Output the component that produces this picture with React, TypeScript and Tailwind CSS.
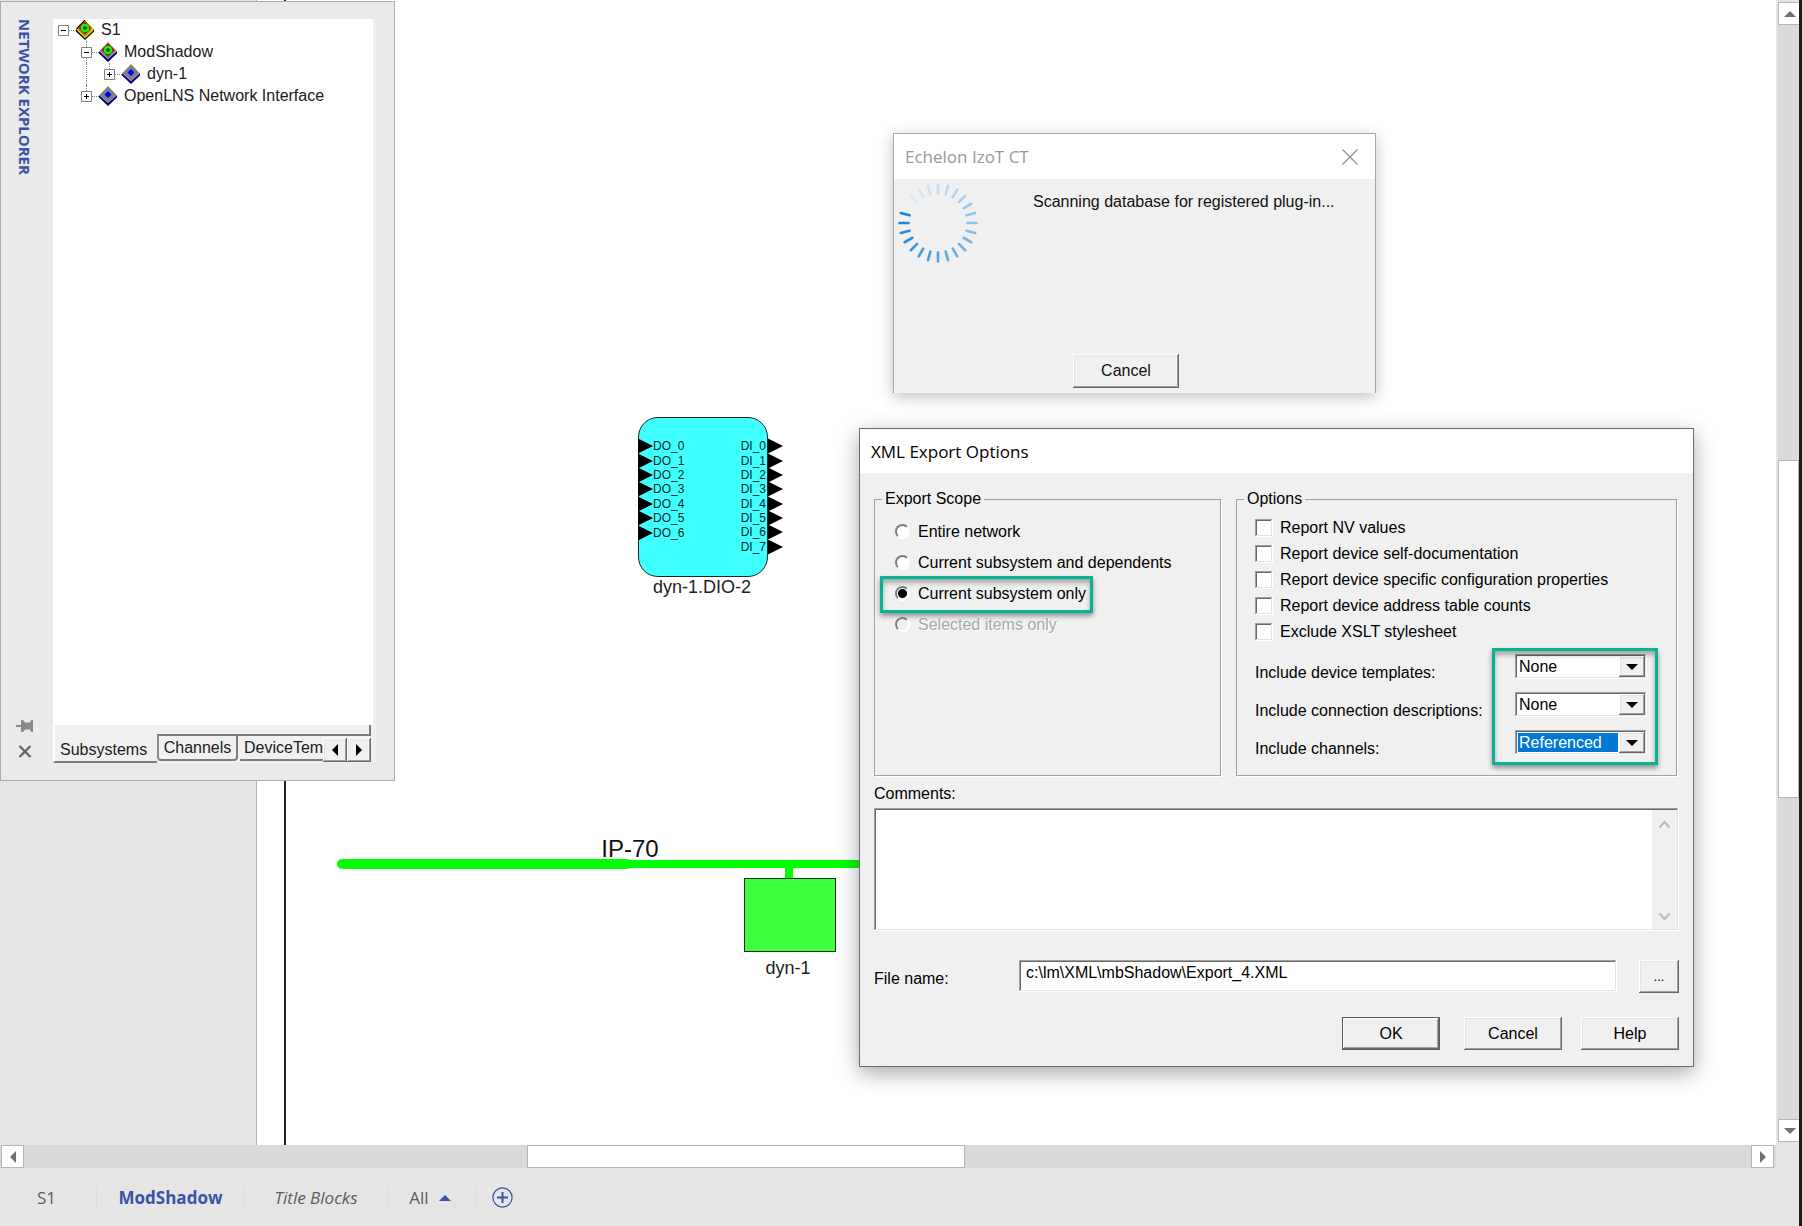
import React from "react";

const RAISED =
  "bg-[#f0f0f0] shadow-[inset_-1px_-1px_0_#696969,inset_1px_1px_0_#ffffff,inset_-2px_-2px_0_#a0a0a0,inset_2px_2px_0_#e3e3e3]";
const SUNKEN =
  "bg-white shadow-[inset_-1px_-1px_0_#ffffff,inset_1px_1px_0_#a0a0a0,inset_-2px_-2px_0_#e3e3e3,inset_2px_2px_0_#696969]";
const ARIAL = "font-['Liberation_Sans',Arial,sans-serif]";
const SEGOE = "font-['Open_Sans','Noto_Sans',sans-serif]";

type Dir = "up" | "down" | "left" | "right";
const TRIANGLES: Record<Dir, string> = {
  up: "M0 6 L6 0 L12 6 Z",
  down: "M0 0 L12 0 L6 6 Z",
  left: "M6 0 L6 12 L0 6 Z",
  right: "M0 0 L6 6 L0 12 Z",
};

function Triangle({ dir, className = "" }: { dir: Dir; className?: string }) {
  const tall = dir === "left" || dir === "right";
  return (
    <svg
      aria-hidden="true"
      width={tall ? 6 : 12}
      height={tall ? 12 : 6}
      viewBox={tall ? "0 0 6 12" : "0 0 12 6"}
      className={className}
    >
      <path d={TRIANGLES[dir]} fill="currentColor" />
    </svg>
  );
}

function ScrollButton({ dir }: { dir: Dir }) {
  return (
    <button
      type="button"
      aria-label={`Scroll ${dir}`}
      className="flex size-[23px] shrink-0 items-center justify-center border border-[#b4b4b4] bg-white text-[#707070]"
    >
      <Triangle dir={dir} />
    </button>
  );
}

/* ---------- Network explorer ---------- */

type NodeKind = "system" | "subsystem" | "device";

function NodeIcon({ kind }: { kind: NodeKind }) {
  const face = kind === "system" ? "#ffff00" : "#808080";
  const side = kind === "system" ? "#000000" : "#000080";
  return (
    <svg aria-hidden="true" width="18" height="20" viewBox="0 0 18 20" className="shrink-0">
      <path d="M0 9 L9 17 L18 9 V11.5 L9 20 L0 11.5 Z" fill={side} />
      <path d="M9 0 L17.5 9 L9 17 L0.5 9 Z" fill={face} />
      {kind === "system" && (
        <>
          <path d="M9 0 L0.5 9" stroke="#000" strokeWidth="1.2" />
          <path d="M1.5 10 L9 17.5 L17 10" fill="none" stroke="#c8c800" strokeWidth="1.5" />
          <path d="M2 8.5 L9 15.5 L16 8.5" fill="none" stroke="#000" strokeWidth="0.8" />
        </>
      )}
      {kind === "device" ? (
        <path d="M9 5 L12.5 8.5 L9 12 L5.5 8.5 Z" fill="#0000ff" />
      ) : (
        <>
          <path d="M9 1.5 L15.5 8 L9 14.5 L2.5 8 Z" fill="#c00000" />
          <path d="M9 1 L15.5 8" stroke="#ff3000" strokeWidth="1" />
          <circle cx="9" cy="8" r="4.3" fill="#00ff00" />
          <path d="M9 6 V10 M7 8 H11" stroke="#003000" strokeWidth="1.4" />
        </>
      )}
    </svg>
  );
}

const TREE: { label: string; kind: NodeKind; open: boolean; indent: string; line: string }[] = [
  { label: "S1", kind: "system", open: true, indent: "pl-[5px]", line: "" },
  {
    label: "ModShadow",
    kind: "subsystem",
    open: true,
    indent: "pl-[28px]",
    line: "before:absolute before:left-[33px] before:top-0 before:h-[6px] before:border-l before:border-dotted before:border-[#808080] after:absolute after:left-[33px] after:top-[17px] after:h-[5px] after:border-l after:border-dotted after:border-[#808080]",
  },
  {
    label: "dyn-1",
    kind: "device",
    open: false,
    indent: "pl-[51px]",
    line: "before:absolute before:left-[56px] before:top-0 before:h-[6px] before:border-l before:border-dotted before:border-[#808080] after:absolute after:left-[33px] after:top-0 after:h-[22px] after:border-l after:border-dotted after:border-[#808080]",
  },
  {
    label: "OpenLNS Network Interface",
    kind: "device",
    open: false,
    indent: "pl-[28px]",
    line: "before:absolute before:left-[33px] before:top-0 before:h-[6px] before:border-l before:border-dotted before:border-[#808080]",
  },
];

function Tree() {
  return (
    <ul className={`flex-1 bg-white text-[16px] leading-[22px] text-[#202020] ${ARIAL}`}>
      {TREE.map((n) => (
        <li key={n.label} className={`relative flex h-[22px] items-center ${n.indent} ${n.line}`}>
          <button
            type="button"
            aria-label={`${n.open ? "Collapse" : "Expand"} ${n.label}`}
            className="size-[11px] shrink-0 bg-white"
          >
            <svg aria-hidden="true" width="11" height="11" viewBox="0 0 11 11">
              <path d="M0.5 0.5 H10.5 V10.5 H0.5 Z" fill="none" stroke="#808080" />
              <path d={n.open ? "M3 5.5 H8" : "M3 5.5 H8 M5.5 3 V8"} stroke="#000" />
            </svg>
          </button>
          <span className="w-[7px] border-t border-dotted border-[#808080]" />
          <NodeIcon kind={n.kind} />
          <span className="pl-[7px]">{n.label}</span>
        </li>
      ))}
    </ul>
  );
}

function NetworkExplorer() {
  return (
    <aside className="absolute left-0 top-px flex h-[780px] w-[395px] border border-[#acacac] bg-[#eaeaea]">
      <div className="flex w-[52px] flex-col items-center pb-[22px] pr-[4px] pt-[17px]">
        <h2
          className={`text-[15px] font-bold leading-[20px] text-[#3a53a4] [writing-mode:vertical-rl] ${SEGOE}`}
        >
          NETWORK EXPLORER
        </h2>
        <button type="button" aria-label="Pin" className="mt-auto text-[#868a8c]">
          <svg aria-hidden="true" width="18" height="12" viewBox="0 0 18 12">
            <path d="M0 5 H5 V0 H7 L9 2.5 H14 L15 0 H17 V12 H15 L14 9.5 H9 L7 12 H5 V7 H0 Z" fill="currentColor" />
          </svg>
        </button>
        <button type="button" aria-label="Close" className="mt-[13px] text-[#666]">
          <svg aria-hidden="true" width="14" height="13" viewBox="0 0 14 13">
            <path d="M1.5 1 L12.5 12 M12.5 1 L1.5 12" stroke="currentColor" strokeWidth="2.4" />
          </svg>
        </button>
      </div>
      <div className="my-[17px] mr-[18px] flex min-w-0 flex-1 flex-col bg-[#f0f0f0]">
        <div className="mr-[3px] flex flex-1 flex-col">
          <Tree />
        </div>
        <div className={`flex h-[38px] items-start pr-[5px] text-[16px] leading-[22px] text-[#202020] ${ARIAL}`}>
          <button
            type="button"
            className="h-[38px] w-[104px] shrink-0 border-b-2 border-l-2 border-b-[#7c7c7c] border-l-white pl-[5px] pt-[13px] text-left"
          >
            Subsystems
          </button>
          <div className="relative flex min-w-0 flex-1 border-r-2 border-r-transparent pt-[9px]">
            <div className="absolute -right-[2px] left-0 top-0 h-[11px] border-b-2 border-r-2 border-[#7c7c7c]" />
            <button
              type="button"
              className="relative h-[27px] w-[81px] shrink-0 rounded-bl rounded-br border-2 border-[#7c7c7c] border-l-[#8c8c8c]"
            >
              Channels
            </button>
            <button
              type="button"
              className="ml-[2px] h-[27px] min-w-0 flex-1 overflow-hidden border-b-2 border-[#7c7c7c] pl-[4px] pt-[3px] text-left"
            >
              DeviceTemplates
            </button>
            <div className="absolute -right-[2px] top-[13px] flex">
              <button
                type="button"
                aria-label="Previous tabs"
                className={`flex size-[24px] items-center justify-center text-black ${RAISED}`}
              >
                <Triangle dir="left" />
              </button>
              <button
                type="button"
                aria-label="Next tabs"
                className={`flex size-[24px] items-center justify-center text-black ${RAISED}`}
              >
                <Triangle dir="right" />
              </button>
            </div>
          </div>
        </div>
      </div>
    </aside>
  );
}

/* ---------- Drawing ---------- */

function PortArrow() {
  return (
    <svg aria-hidden="true" width="15" height="16" viewBox="0 0 15 16" className="shrink-0">
      <path d="M0 0.5 L15 8 L0 15.5 Z" fill="#000" />
    </svg>
  );
}

function Diagram() {
  return (
    <div className={ARIAL}>
      <div className="absolute left-[638px] top-[417px] h-[160px] w-[130px] rounded-[20px] border border-[#222] bg-[#40ffff] text-[12px] text-[#0a2a2a]">
        <ul className="absolute -left-px top-[21px] flex h-[101px] flex-col">
          {[0, 1, 2, 3, 4, 5, 6].map((i) => (
            <li key={i} className="flex min-h-0 flex-1 items-center leading-none">
              <PortArrow />
              DO_{i}
            </li>
          ))}
        </ul>
        <ul className="absolute -right-[16px] top-[21px] flex h-[115px] flex-col">
          {[0, 1, 2, 3, 4, 5, 6, 7].map((i) => (
            <li key={i} className="flex min-h-0 flex-1 items-center justify-end gap-[2px] leading-none">
              DI_{i}
              <PortArrow />
            </li>
          ))}
        </ul>
      </div>
      <p className="absolute left-[602px] top-[577px] w-[200px] text-center text-[18px] leading-[20px] text-[#222]">
        dyn-1.DIO-2
      </p>

      <p className="absolute left-[580px] top-[835px] w-[100px] text-center text-[24px] leading-[28px] text-[#111]">
        IP-70
      </p>
      <div className="absolute left-[337px] top-[859px] h-[10px] w-[295px] rounded-full bg-[#00ff00]" />
      <div className="absolute left-[620px] top-[860px] h-[8px] w-[300px] bg-[#00ff00]" />
      <div className="absolute left-[785px] top-[866px] h-[14px] w-[8px] bg-[#00ff00]" />
      <div className="absolute left-[744px] top-[878px] h-[74px] w-[92px] border border-[#123312] bg-[#40ff40]" />
      <p className="absolute left-[738px] top-[958px] w-[100px] text-center text-[18px] leading-[20px] text-[#222]">
        dyn-1
      </p>
    </div>
  );
}

/* ---------- Scanning dialog ---------- */

/* Spokes fade anticlockwise from full blue towards a pale blue tail. */
function spokeColor(i: number) {
  const t = i / 23;
  const mix = (a: number, b: number) => Math.round(a + (b - a) * t);
  return `rgb(${mix(24, 228)}, ${mix(131, 241)}, ${mix(215, 250)})`;
}

function Spinner() {
  return (
    <svg aria-hidden="true" width="80" height="80" viewBox="-40 -40 80 80" className="shrink-0">
      {Array.from({ length: 24 }, (_, i) => (
        <path
          key={i}
          d="M-29.5 0 H-38.5"
          stroke={spokeColor(i)}
          strokeWidth="2.6"
          strokeLinecap="round"
          transform={`rotate(${15 - i * 15})`}
        />
      ))}
    </svg>
  );
}

function ScanDialog() {
  return (
    <section
      role="dialog"
      aria-labelledby="scan-title"
      className="absolute left-[893px] top-[133px] flex h-[260px] w-[483px] flex-col border border-b-0 border-[#a5a5a5] bg-[#f0f0f0] shadow-[0_4px_14px_rgba(0,0,0,0.25)]"
    >
      <header className="flex h-[45px] items-center justify-between bg-white pl-[11px] pr-[17px]">
        <h2 id="scan-title" className={`text-[17px] leading-[24px] text-[#999] ${SEGOE}`}>
          Echelon IzoT CT
        </h2>
        <button type="button" aria-label="Close" className="text-[#8a8a8a]">
          <svg aria-hidden="true" width="16" height="16" viewBox="0 0 16 16">
            <path d="M0.5 0.5 L15.5 15.5 M15.5 0.5 L0.5 15.5" stroke="currentColor" strokeWidth="1.1" />
          </svg>
        </button>
      </header>
      <div className={`flex flex-1 flex-col pb-[5px] text-[16px] leading-[20px] text-[#111] ${ARIAL}`}>
        <div className="flex pl-[4px] pt-[4px]">
          <Spinner />
          <p className="pl-[55px] pt-[9px]">Scanning database for registered plug-in...</p>
        </div>
        <button type="button" className={`ml-[179px] mt-auto h-[34px] w-[106px] ${RAISED}`}>
          Cancel
        </button>
      </div>
    </section>
  );
}

/* ---------- Export dialog ---------- */

const HIGHLIGHT =
  "pointer-events-none absolute border-[3px] border-[#08b294] shadow-[0_3px_5px_rgba(0,0,0,0.4),inset_0_4px_5px_rgba(0,0,0,0.3)]";

const SCOPES = [
  { id: "all", label: "Entire network" },
  { id: "deps", label: "Current subsystem and dependents" },
  { id: "current", label: "Current subsystem only" },
  { id: "selected", label: "Selected items only" },
];

const REPORTS = [
  "Report NV values",
  "Report device self-documentation",
  "Report device specific configuration properties",
  "Report device address table counts",
  "Exclude XSLT stylesheet",
];

const INCLUDES = [
  { id: "inc-templates", label: "Include device templates:", value: "None", tone: "text-black" },
  { id: "inc-connections", label: "Include connection descriptions:", value: "None", tone: "text-black" },
  { id: "inc-channels", label: "Include channels:", value: "Referenced", tone: "bg-[#0078d7] text-white" },
];

function Chevron({ d }: { d: string }) {
  return (
    <svg aria-hidden="true" width="13" height="9" viewBox="0 0 13 9">
      <path d={d} fill="none" stroke="#bcbcbc" strokeWidth="2.4" />
    </svg>
  );
}

function ExportDialog() {
  return (
    <section
      role="dialog"
      aria-labelledby="export-title"
      className="absolute left-[859px] top-[428px] w-[835px] border border-[#6c6c6c] bg-[#f0f0f0] shadow-[0_6px_20px_rgba(0,0,0,0.35)]"
    >
      <header className="flex h-[44px] items-center bg-white pl-[11px] pt-[2px]">
        <h2 id="export-title" className={`text-[17px] leading-[24px] text-black ${SEGOE}`}>
          XML Export Options
        </h2>
      </header>
      <form
        className={`px-[14px] pb-[16px] pt-[16px] text-[16px] leading-[20px] text-black ${ARIAL}`}
        onSubmit={(e) => e.preventDefault()}
      >
        <div className="flex gap-[15px] pr-[2px]">
          <fieldset className="h-[287px] w-[347px] border border-[#a0a0a0] px-[7px] shadow-[1px_1px_0_#ffffff]">
            <legend className="px-[3px]">Export Scope</legend>
            <div className="flex flex-col items-start pl-[13px] pt-[7px]">
              {SCOPES.map((s) => (
                <label
                  key={s.id}
                  className={`relative flex h-[31px] items-center gap-[8px] ${
                    s.id === "selected" ? "text-[#a8a8a8] [text-shadow:1px_1px_0_#ffffff]" : ""
                  }`}
                >
                  <input
                    type="radio"
                    name="scope"
                    defaultChecked={s.id === "current"}
                    disabled={s.id === "selected"}
                    className="size-[15px] appearance-none rounded-full border-2 border-b-white border-l-[#7c7c7c] border-r-white border-t-[#7c7c7c] bg-white checked:bg-[radial-gradient(circle,#000_4px,#fff_5px)] disabled:bg-[#f0f0f0]"
                  />
                  {s.label}
                  {s.id === "current" && (
                    <span className={`${HIGHLIGHT} -bottom-[4px] -left-[15px] -right-[7px] -top-[2px]`} />
                  )}
                </label>
              ))}
            </div>
          </fieldset>

          <fieldset className="h-[287px] flex-1 border border-[#a0a0a0] px-[7px] shadow-[1px_1px_0_#ffffff]">
            <legend className="px-[3px]">Options</legend>
            <div className="flex flex-col items-start pl-[11px] pt-[6px]">
              {REPORTS.map((r) => (
                <label key={r} className="flex h-[26px] items-center gap-[7px]">
                  <input type="checkbox" className={`size-[18px] appearance-none ${SUNKEN}`} />
                  {r}
                </label>
              ))}
            </div>
            <div className="flex justify-between pl-[11px] pr-[22px] pt-[9px]">
              <div>
                {INCLUDES.map((f) => (
                  <label key={f.id} htmlFor={f.id} className="block h-[38px] pt-[9px]">
                    {f.label}
                  </label>
                ))}
              </div>
              <div className="relative w-[132px]">
                {INCLUDES.map((f) => (
                  <div key={f.id} className="h-[38px]">
                    <div className={`flex h-[25px] p-[2px] ${SUNKEN}`}>
                      <select
                        id={f.id}
                        defaultValue={f.value}
                        className={`m-px min-w-0 flex-1 appearance-none pl-px leading-[19px] outline-none ${f.tone}`}
                      >
                        <option>None</option>
                        <option>Referenced</option>
                        <option>All</option>
                      </select>
                      <span className={`flex w-[26px] items-center justify-center ${RAISED}`}>
                        <Triangle dir="down" />
                      </span>
                    </div>
                  </div>
                ))}
                <span className={`${HIGHLIGHT} -left-[23px] -right-[11px] -top-[6px] bottom-[3px]`} />
              </div>
            </div>
          </fieldset>
        </div>

        <label htmlFor="comments" className="mt-[8px] block">
          Comments:
        </label>
        <div className={`mt-[4px] flex h-[123px] p-[2px] ${SUNKEN}`}>
          <textarea id="comments" className="min-w-0 flex-1 resize-none bg-transparent px-1 outline-none" />
          <div className="flex w-[25px] flex-col items-center justify-between bg-[#f0f0f0] pb-[8px] pt-[10px]">
            <Chevron d="M1.5 7.5 L6.5 2 L11.5 7.5" />
            <Chevron d="M1.5 1.5 L6.5 7 L11.5 1.5" />
          </div>
        </div>

        <div className="mt-[29px] flex items-start">
          <label htmlFor="file" className="w-[145px] pt-[9px]">
            File name:
          </label>
          <input
            id="file"
            type="text"
            defaultValue={"c:\\lm\\XML\\mbShadow\\Export_4.XML"}
            className={`h-[32px] min-w-0 flex-1 px-[7px] pb-[7px] outline-none ${SUNKEN}`}
          />
          <button type="button" className={`ml-[22px] h-[33px] w-[40px] text-[13px] ${RAISED}`}>
            ...
          </button>
        </div>

        <div className="mt-[24px] flex justify-end">
          <button
            type="submit"
            className="h-[33px] w-[98px] border border-[#5c5c5c] bg-[#f0f0f0] shadow-[inset_-1px_-1px_0_#696969,inset_1px_1px_0_#ffffff,inset_-2px_-2px_0_#a0a0a0]"
          >
            OK
          </button>
          <button type="button" className={`ml-[24px] h-[33px] w-[98px] ${RAISED}`}>
            Cancel
          </button>
          <button type="button" className={`ml-[19px] h-[33px] w-[98px] ${RAISED}`}>
            Help
          </button>
        </div>
      </form>
    </section>
  );
}

/* ---------- Page tabs ---------- */

function PageTabs() {
  return (
    <nav
      aria-label="Pages"
      className={`flex h-[58px] items-center pt-px text-[17px] leading-[24px] text-[#5c5c5c] ${SEGOE}`}
    >
      <button type="button" className="w-[97px] border-r border-[#dcdcdc] pr-[3px]">
        S1
      </button>
      <button type="button" className="w-[148px] border-r border-[#dcdcdc] font-bold text-[#3a53a4]">
        ModShadow
      </button>
      <button type="button" className="w-[143px] border-r border-[#dcdcdc] italic">
        Title Blocks
      </button>
      <button type="button" className="flex w-[88px] items-center justify-center gap-[10px] border-r border-[#dcdcdc] pr-[3px]">
        All
        <Triangle dir="up" className="text-[#3a53a4]" />
      </button>
      <button type="button" aria-label="Insert page" className="ml-[16px] text-[#3a53a4]">
        <svg aria-hidden="true" width="21" height="21" viewBox="0 0 21 21">
          <circle cx="10.5" cy="10.5" r="9.6" fill="none" stroke="currentColor" strokeWidth="1.2" />
          <path d="M10.5 5 V16 M5 10.5 H16" stroke="currentColor" strokeWidth="2" />
        </svg>
      </button>
    </nav>
  );
}

export default function App() {
  return (
    <div className="relative flex h-screen w-full overflow-hidden border-r-[3px] border-[#1c1e1c] bg-[#e5e5e5]">
      <div className="flex min-w-0 flex-1 flex-col">
        <main className="flex min-h-0 flex-1">
          <div className="w-[257px] shrink-0 border-r border-[#abb1bd] bg-[#e5e5e5]" />
          <div className="w-[27px] shrink-0 bg-white" />
          <div className="flex-1 border-l-2 border-[#222] bg-white" />
        </main>
        <div className="flex h-[23px] bg-[#dadada] pl-[1px] pr-[2px]">
          <ScrollButton dir="left" />
          <div className="flex min-w-0 flex-1">
            <div className="flex-[504]" />
            <div className="flex-[436] border border-[#b4b4b4] bg-white" />
            <div className="flex-[787]" />
          </div>
          <ScrollButton dir="right" />
        </div>
        <PageTabs />
      </div>
      <div className="flex w-[23px] shrink-0 flex-col border-l-2 border-[#e5e5e5] pb-[84px] pt-[2px]">
        <div className="flex flex-1 flex-col bg-[#dadada]">
          <ScrollButton dir="up" />
          <div className="flex-[436]" />
          <div className="flex-[336] border border-[#b4b4b4] bg-white" />
          <div className="flex-[322]" />
          <ScrollButton dir="down" />
        </div>
      </div>
      <Diagram />
      <NetworkExplorer />
      <ScanDialog />
      <ExportDialog />
    </div>
  );
}
